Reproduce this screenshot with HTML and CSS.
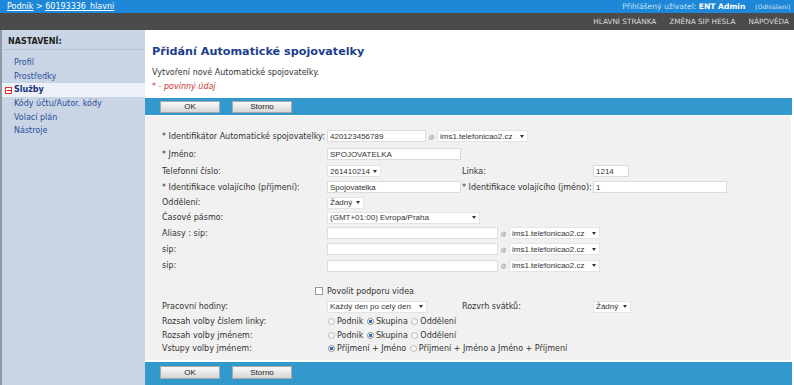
FILE: index.html
```html
<!DOCTYPE html>
<html lang="cs">
<head>
<meta charset="utf-8">
<title>Přidání Automatické spojovatelky</title>
<link rel="stylesheet" href="styles.css">
</head>
<body>
<div class="top">
  <div class="crumbs"><a href="#">Podnik</a> &gt; <a href="#">60193336_hlavni</a></div>
  <div class="user">Přihlášený uživatel: <b>ENT Admin</b><a class="logout" href="#">[Odhlášení]</a></div>
</div>
<div class="nav"><a href="#">HLAVNÍ STRÁNKA</a><a href="#">ZMĚNA SIP HESLA</a><a href="#">NÁPOVĚDA</a></div>
<div class="layout">
  <aside class="side">
    <div class="side-h">NASTAVENÍ:</div>
    <ul class="menu">
      <li>Profil</li>
      <li>Prostředky</li>
      <li class="active"><span class="mark"></span>Služby</li>
      <li>Kódy účtu/Autor. kódy</li>
      <li>Volací plán</li>
      <li>Nástroje</li>
    </ul>
  </aside>
  <main class="main">
    <h1 class="title">Přidání Automatické spojovatelky</h1>
    <p class="desc">Vytvoření nové Automatické spojovatelky.</p>
    <p class="req">* - povinný údaj</p>
    <div class="bar"><button class="btn">OK</button><button class="btn">Storno</button></div>
    <div class="form">
      <div class="row h18">
        <span class="lbl">* Identifikátor Automatické spojovatelky:</span>
        <input class="inp w99" value="420123456789"><span class="at">@</span><span class="sel w91">ims1.telefonicao2.cz<i class="arr"></i></span>
      </div>
      <div class="row h18">
        <span class="lbl">* Jméno:</span>
        <input class="inp w134" value="SPOJOVATELKA">
      </div>
      <div class="row h16">
        <span class="lbl">Telefonní číslo:</span>
        <span class="cell"><span class="sel w54">261410214<i class="arr"></i></span></span>
        <span class="lbl2">Linka:</span>
        <input class="inp w36" value="1214">
      </div>
      <div class="row h16">
        <span class="lbl">* Identifikace volajícího (příjmení):</span>
        <span class="cell"><input class="inp w134" value="Spojovatelka"></span>
        <span class="lbl2">* Identifikace volajícího (jméno):</span>
        <input class="inp w134" value="1">
      </div>
      <div class="row h15">
        <span class="lbl">Oddělení:</span>
        <span class="sel w37">Žádný<i class="arr"></i></span>
      </div>
      <div class="row h15">
        <span class="lbl">Časové pásmo:</span>
        <span class="sel w153">(GMT+01:00) Evropa/Praha<i class="arr"></i></span>
      </div>
      <div class="row h16">
        <span class="lbl">Aliasy : sip:</span>
        <input class="inp w171" value=""><span class="at">@</span><span class="sel w91">ims1.telefonicao2.cz<i class="arr"></i></span>
      </div>
      <div class="row h16">
        <span class="lbl">sip:</span>
        <input class="inp w171" value=""><span class="at">@</span><span class="sel w91">ims1.telefonicao2.cz<i class="arr"></i></span>
      </div>
      <div class="row h17">
        <span class="lbl">sip:</span>
        <input class="inp w171" value=""><span class="at">@</span><span class="sel w91">ims1.telefonicao2.cz<i class="arr"></i></span>
      </div>
      <div class="row h16 gap">
        <span class="chkcell"><span class="chk"></span>Povolit podporu videa</span>
      </div>
      <div class="row h15">
        <span class="lbl">Pracovní hodiny:</span>
        <span class="cell"><span class="sel w100">Každý den po celý den<i class="arr"></i></span></span>
        <span class="lbl2">Rozvrh svátků:</span>
        <span class="sel w38">Žádný<i class="arr"></i></span>
      </div>
      <div class="row h14">
        <span class="lbl">Rozsah volby číslem linky:</span>
        <span class="radios"><span class="rad"></span>Podnik <span class="rad on"></span>Skupina <span class="rad"></span>Oddělení</span>
      </div>
      <div class="row h14">
        <span class="lbl">Rozsah volby jménem:</span>
        <span class="radios"><span class="rad"></span>Podnik <span class="rad on"></span>Skupina <span class="rad"></span>Oddělení</span>
      </div>
      <div class="row h13">
        <span class="lbl">Vstupy volby jménem:</span>
        <span class="radios"><span class="rad on"></span>Příjmení + Jméno <span class="rad"></span>Příjmení + Jméno a Jméno + Příjmení</span>
      </div>
    </div>
    <div class="bar bar-bottom"><button class="btn">OK</button><button class="btn">Storno</button></div>
  </main>
</div>
</body>
</html>
```
FILE: styles.css
```css
* { box-sizing: border-box; }
body {
  margin: 0;
  width: 794px;
  height: 385px;
  overflow: hidden;
  background: #fff;
  font-family: "DejaVu Sans", Verdana, sans-serif;
  font-size: 8px;
  color: #333;
}
a { color: inherit; text-decoration: none; }

.top {
  height: 13px;
  background: #1e87d7;
  display: flex;
  justify-content: space-between;
  align-items: center;
  padding: 0 4px 0 7px;
  color: #fff;
}
.crumbs a { text-decoration: underline; }
.user { color: #c6e2fb; font-size: 7.6px; }
.user b { color: #fff; }
.logout { font-size: 6px; margin-left: 10px; color: #d8e6f4; }

.nav {
  height: 17px;
  background: #4b4b4b;
  display: flex;
  justify-content: flex-end;
  align-items: center;
  gap: 13px;
  padding-right: 5px;
}
.nav a { color: #dcdcdc; font-size: 7.3px; font-weight: normal; }

.layout { display: flex; height: 355px; }

.side {
  width: 145px;
  flex: none;
  background: #c9d5e5;
  border-left: 2px solid #8e98a6;
}
.side-h {
  font-weight: bold;
  color: #1e1e1e;
  height: 20px;
  line-height: 18px;
  padding: 3px 0 0 6px;
  border-bottom: 1px solid #b7c3d3;
}
.menu { list-style: none; margin: 0; padding: 6px 0 0; }
.menu li {
  height: 13.7px;
  line-height: 13.7px;
  padding-left: 12px;
  color: #2c4d9c;
}
.menu li.active {
  background: #eef1f7;
  font-weight: bold;
  color: #15317a;
  display: flex;
  align-items: center;
  padding-left: 3px;
}
.mark {
  width: 7px;
  height: 7px;
  margin-right: 2px;
  border: 1px solid #d33;
  background: #fff;
  position: relative;
}
.mark::after {
  content: "";
  position: absolute;
  left: 1px;
  top: 2px;
  width: 4px;
  height: 1px;
  background: #d00;
}

.main { flex: 1; padding-right: 2px; display: flex; flex-direction: column; }
.title {
  margin: 0;
  padding: 15px 0 0 7px;
  height: 36px;
  font-size: 11.2px;
  line-height: 14px;
  color: #203e8c;
}
.desc { margin: 0; padding-left: 7px; height: 14px; line-height: 14px; color: #333; }
.req { margin: 0; padding-left: 7px; height: 14px; line-height: 14px; color: #c33; font-style: italic; }

.bar {
  height: 17px;
  flex: none;
  background: #3399cc;
  display: flex;
  align-items: center;
  gap: 12px;
  padding-left: 15px;
  margin-top: 4px;
}
.bar-bottom {
  margin-top: 2px;
  height: 23px;
  align-items: flex-start;
  padding-top: 4px;
}
.btn {
  width: 60px;
  height: 12px;
  padding: 0;
  border: 1px solid #a8a8a8;
  background: linear-gradient(#fafafa, #d6d6d6);
  font-family: "Liberation Sans", Arial, sans-serif;
  font-size: 8px;
  color: #222;
  line-height: 10px;
}
.bar-bottom .btn { height: 13px; }

.form {
  margin-top: 1px;
  height: 244px;
  flex: none;
  background: #f2f1f1;
  border-right: 1px solid #fff;
  padding: 11px 0 0 17px;
}
.row { display: flex; align-items: center; }
.h13 { height: 13px; }
.h14 { height: 14px; }
.h15 { height: 15px; }
.h16 { height: 16px; }
.h17 { height: 17px; }
.h18 { height: 18px; }
.gap { margin-top: 9px; }

.lbl { width: 165px; flex: none; }
.cell { width: 135px; flex: none; display: flex; }
.lbl2 { width: 131px; flex: none; }

.inp {
  height: 12px;
  border: 1px solid #dcdcdc;
  background: #fff;
  font-family: "Liberation Sans", Arial, sans-serif;
  font-size: 8px;
  color: #333;
  padding: 0 2px;
  outline: none;
}
.sel {
  height: 12px;
  background: #fff;
  border: 1px solid #e4e4e4;
  font-family: "Liberation Sans", Arial, sans-serif;
  font-size: 8px;
  color: #333;
  display: flex;
  align-items: center;
  justify-content: space-between;
  padding: 0 3px 0 2px;
  white-space: nowrap;
}
.arr {
  width: 0;
  height: 0;
  border-left: 2.5px solid transparent;
  border-right: 2.5px solid transparent;
  border-top: 3px solid #333;
}
.at {
  width: 11px;
  flex: none;
  text-align: center;
  font-size: 6px;
  color: #888;
}
.w36 { width: 36px; }
.w37 { width: 37px; }
.w38 { width: 38px; }
.w54 { width: 54px; }
.w91 { width: 91px; }
.w99 { width: 99px; }
.w100 { width: 100px; }
.w134 { width: 134px; }
.w153 { width: 153px; }
.w171 { width: 171px; }

.chkcell { margin-left: 153px; display: flex; align-items: center; }
.chk {
  width: 8px;
  height: 8px;
  border: 1px solid #999;
  background: #fff;
  margin-right: 4px;
}
.radios { display: flex; align-items: center; white-space: pre; }
.rad {
  width: 7px;
  height: 7px;
  border-radius: 50%;
  border: 1px solid #bbb;
  background: #f6f6f6;
  margin: 0 2px 0 1px;
}
.rad.on {
  border-color: #888;
  background: radial-gradient(circle, #2b6fc0 0 1.6px, #fff 2px);
}
```
